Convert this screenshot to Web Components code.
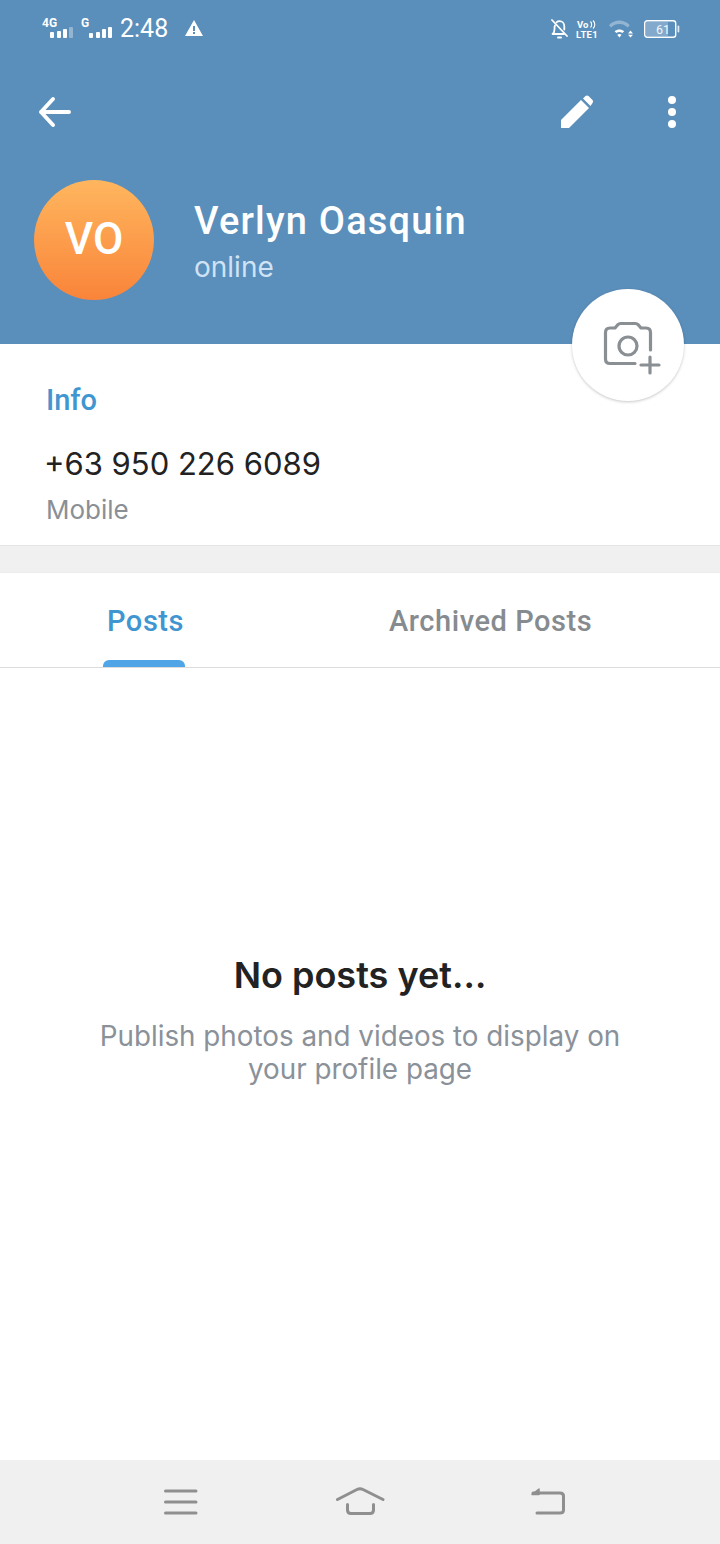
<!DOCTYPE html>
<html>
<head>
<meta charset="utf-8">
<style>
html,body{margin:0;padding:0;}
body{font-family:Roboto,"Liberation Sans",sans-serif;background:#fff;}
</style>
</head>
<body>
<profile-page>
  <status-bar></status-bar>
  <profile-header name="Verlyn Oasquin" status="online" initials="VO"></profile-header>
  <info-section phone="+63 950 226 6089" label="Mobile"></info-section>
  <post-tabs></post-tabs>
  <empty-state heading="No posts yet…">Publish photos and videos to display on<br>your profile page</empty-state>
  <nav-bar></nav-bar>
</profile-page>
<script>
class ProfilePage extends HTMLElement {
  constructor(){
    super()
    this.attachShadow({mode:'open'})
    this.shadowRoot.innerHTML = `<style>
      :host{display:flex;flex-direction:column;width:720px;height:1544px;background:#fff;overflow:hidden;}
    </style><slot></slot>`
  }
}
customElements.define('profile-page',ProfilePage)

class StatusBar extends HTMLElement {
  constructor(){
    super()
    this.attachShadow({mode:'open'})
    this.shadowRoot.innerHTML = `<style>
      :host{display:flex;height:56px;box-sizing:border-box;padding:15px 40px 0 42px;background:#5a8ebb;color:#fff;align-items:flex-start;}
      svg{display:block;fill:#fff;flex:none;}
      .left{display:flex;flex:1;}
      .right{display:flex;}
      .time{font:400 25px/28px Roboto,sans-serif;}
      text{font-family:Roboto,sans-serif;}
    </style>
    <div class="left">
      <svg width="32" height="24" viewBox="0 0 32 24" style="margin-right:7px">
        <text x="0" y="12" font-weight="700" font-size="12">4G</text>
        <rect x="8" y="17" width="4" height="6" rx="1"/><rect x="15" y="16" width="4" height="7" rx="1"/>
        <rect x="21" y="14" width="4" height="9" rx="1"/><rect x="27" y="12" width="4" height="11" rx="1" opacity=".35"/>
      </svg>
      <svg width="33" height="24" viewBox="0 0 33 24" style="margin-right:6px">
        <text x="0" y="12" font-weight="700" font-size="12">G</text>
        <rect x="8" y="18" width="4" height="5" rx="1"/><rect x="15" y="17" width="4" height="6" rx="1"/>
        <rect x="21" y="14" width="4" height="9" rx="1"/><rect x="27" y="12" width="4" height="11" rx="1"/>
      </svg>
      <span class="time">2:48</span>
      <svg width="18" height="16" viewBox="0 0 18 16" style="margin:5px 0 0 17px">
        <path fill-rule="evenodd" d="M9 0 18 16H0ZM8 6V11H10V6ZM8 12V14H10V12Z"/>
      </svg>
    </div>
    <div class="right">
      <svg width="17" height="20" viewBox="0 0 17 20" style="margin:4px 0 0 0">
        <g fill="none" stroke="#fff" stroke-width="1.8" stroke-linecap="round" stroke-linejoin="round">
          <path d="M4 6.500C3.400 7.500 3.500 9 3.500 10.500 3.500 12.500 2.800 14 1.500 15H13"/>
          <path d="M5.500 3.400C6.300 2.600 7.300 2.200 8.500 2.200 11.300 2.200 13.300 4.400 13.300 7.200V10.500"/>
          <path d="M1 1 16 17"/>
        </g>
        <rect x="6" y="17.500" width="5" height="2" rx="1"/>
      </svg>
      <svg width="25" height="20" viewBox="0 0 25 20" style="margin:5px 0 0 8px;margin-right:-1px">
        <text x="1" y="7.500" font-weight="700" font-size="9.500">Vo</text>
        <path d="M14.500 1.500C16 3 16 6 14.500 7.500M17 .5C19.400 2.800 19.400 6.200 17 8.500" fill="none" stroke="#fff" stroke-width="1.100"/>
        <text x="0" y="18" font-weight="700" font-size="9.500" letter-spacing=".3">LTE1</text>
      </svg>
      <svg width="26" height="20" viewBox="0 0 26 20" style="margin:4px 0 0 9px">
        <path d="M0 6.200C5.600 0 15.200 0 20.800 6.200L18.600 8.400C14.200 3.800 6.600 3.800 2.200 8.400Z" opacity=".35"/>
        <path d="M5.600 12.200C8.400 9.800 12.400 9.800 15.200 12.200L13.400 14C11.600 12.600 9.200 12.600 7.400 14Z"/>
        <path d="M8.200 15.800C9.500 14.600 11.300 14.600 12.600 15.800L10.400 18.400Z"/>
        <path d="M21.500 11.500 24 14.500H19ZM19 15.800H24L21.500 18.400Z"/>
      </svg>
      <svg width="36" height="18" viewBox="0 0 36 18" style="margin:5px 0 0 9px">
        <rect x="2" y="2" width="22" height="14" fill="#fff" opacity=".25"/>
        <rect x=".7" y=".7" width="31" height="16.600" rx="2.500" fill="none" stroke="#fff" stroke-width="1.400"/>
        <rect x="33.500" y="5.500" width="1.800" height="7" rx=".9" opacity=".8"/>
        <text x="12" y="14" font-size="12.500" opacity=".9">61</text>
      </svg>
    </div>`
  }
}
customElements.define('status-bar',StatusBar)

class ProfileHeader extends HTMLElement {
  constructor(){
    super()
    this.attachShadow({mode:'open'})
    this.shadowRoot.innerHTML = `<style>
      :host{display:block;position:relative;height:288px;background:#5a8ebb;color:#fff;}
      .tools{display:flex;align-items:center;height:82px;padding:30px 44px 0 36px;box-sizing:border-box;}
      .tools svg{display:block;}
      .back{flex:1;}
      .hero{display:flex;align-items:center;gap:40px;margin-top:42px;padding-left:34px;}
      .avatar{width:120px;height:120px;border-radius:50%;flex:none;display:flex;align-items:center;justify-content:center;
        background:linear-gradient(#ffb65e,#f9843a);font:500 44px/1 Roboto,sans-serif;padding-bottom:2px;box-sizing:border-box;}
      .name{font:500 38px/44px Roboto,sans-serif;letter-spacing:1.200px;margin-top:3px;}
      .status{font:400 28px/34px Inter,Roboto,sans-serif;color:#cfe3f5;margin-top:7px;}
      .fab{position:absolute;left:572px;top:233px;width:112px;height:112px;border-radius:50%;background:#fff;
        box-shadow:0 1px 3px rgba(0,0,0,.22);display:flex;align-items:center;justify-content:center;}
      .fab svg{overflow:visible;}
    </style>
    <div class="tools">
      <svg class="back" width="38" height="36" viewBox="0 0 38 36" preserveAspectRatio="xMinYMid meet">
        <path d="M5 18H33M17 5 5 18 17 31" fill="none" stroke="#fff" stroke-width="4" stroke-linecap="round" stroke-linejoin="round"/>
      </svg>
      <svg width="34" height="34" viewBox="0 0 34 34" style="margin-right:74px" fill="#fff">
        <path d="M1 25 21 5 29 13 9 33H1Z"/>
        <path d="M23 3.500 25.500 1C26.300.2 27.700.2 28.500 1L32.500 5C33.300 5.800 33.300 7.200 32.500 8L30.500 11Z"/>
      </svg>
      <svg width="8" height="32" viewBox="0 0 8 32" fill="#fff">
        <circle cx="4" cy="4" r="4"/><circle cx="4" cy="16" r="4"/><circle cx="4" cy="28" r="4"/>
      </svg>
    </div>
    <div class="hero">
      <div class="avatar">${this.getAttribute('initials')}</div>
      <div>
        <div class="name">${this.getAttribute('name')}</div>
        <div class="status">${this.getAttribute('status')}</div>
      </div>
    </div>
    <div class="fab">
      <svg width="60" height="56" viewBox="0 0 60 56" fill="none" stroke="#8a8f93" stroke-width="3.200" stroke-linecap="round" stroke-linejoin="round">
        <path d="M37 46.500H12C9 46.500 7.500 45 7.500 42V15.500C7.500 12.500 9 11 12 11H17L20 7.500C20.600 6.800 21.500 6.500 22.500 6.500H37.500C38.500 6.500 39.400 6.800 40 7.500L43 11H48C51 11 52.500 12.500 52.500 15.500V33"/>
        <circle cx="30" cy="29" r="9"/>
        <path d="M52 40V56M43 48H61"/>
      </svg>
    </div>`
  }
}
customElements.define('profile-header',ProfileHeader)

class InfoSection extends HTMLElement {
  constructor(){
    super()
    this.attachShadow({mode:'open'})
    this.shadowRoot.innerHTML = `<style>
      :host{display:block;height:201px;box-sizing:border-box;padding:36px 46px 0 46px;background:#fff;}
      .h{font:500 29px/40px Roboto,sans-serif;color:#3f96d0;}
      .phone{font:400 31px/44px Inter,Roboto,sans-serif;color:#222;margin:22px 0 0 -2px;}
      .label{font:400 26px/36px Inter,Roboto,sans-serif;color:#8a8f95;margin-top:6px;}
    </style>
    <div class="h">Info</div>
    <div class="phone">${this.getAttribute('phone')}</div>
    <div class="label">${this.getAttribute('label')}</div>`
  }
}
customElements.define('info-section',InfoSection)

class PostTabs extends HTMLElement {
  constructor(){
    super()
    this.attachShadow({mode:'open'})
    this.shadowRoot.innerHTML = `<style>
      :host{display:block;background:#f0f0f0;border-top:1px solid #e4e4e4;padding-top:26px;}
      .bar{display:flex;gap:205px;height:96px;box-sizing:border-box;padding-left:107px;background:#fff;border-top:1px solid #ececec;border-bottom:1px solid #dcdcdc;}
      .tab{position:relative;font:500 29px/96px Roboto,sans-serif;color:#868b8f;letter-spacing:.55px;}
      .on{color:#3f96d0;}
      .on::after{content:"";position:absolute;left:-4px;width:82px;bottom:0;height:7px;background:#50a5e6;border-radius:6px 6px 0 0;}
    </style>
    <div class="bar"><div class="tab on">Posts</div><div class="tab">Archived Posts</div></div>`
  }
}
customElements.define('post-tabs',PostTabs)

class EmptyState extends HTMLElement {
  constructor(){
    super()
    this.attachShadow({mode:'open'})
    this.shadowRoot.innerHTML = `<style>
      :host{display:block;flex:1;box-sizing:border-box;padding-top:281px;text-align:center;}
      h2{margin:0;font:600 36px/52px Inter,Roboto,sans-serif;color:#222;}
      p{margin:19px 0 0;font:400 27.800px/33px Inter,Roboto,sans-serif;color:#8a9199;}
    </style>
    <h2>${this.getAttribute('heading')}</h2>
    <p><slot></slot></p>`
  }
}
customElements.define('empty-state',EmptyState)

class NavBar extends HTMLElement {
  constructor(){
    super()
    this.attachShadow({mode:'open'})
    this.shadowRoot.innerHTML = `<style>
      :host{display:flex;height:84px;background:#f0f0f0;align-items:flex-start;box-sizing:border-box;padding:25px 0 0 164px;}
      svg{display:block;fill:none;stroke:#8f8f8f;stroke-width:3;stroke-linecap:round;stroke-linejoin:round;}
    </style>
    <svg width="34" height="30" viewBox="0 0 34 30" style="margin-top:2px"><path d="M1.500 4H32M1.500 15H32M1.500 26H32"/></svg>
    <svg width="50" height="34" viewBox="0 0 50 34" style="margin:0 145px 0 137px">
      <path d="M2.500 14.500 22 4.500C23.500 3.700 26.500 3.700 28 4.500L48 14.500"/>
      <path d="M12.500 19.500V25C12.500 27.500 14 28.500 16 28.500H35C37 28.500 38.500 27.500 38.500 25V19.500"/>
    </svg>
    <svg width="36" height="30" viewBox="0 0 36 30" style="margin-top:2px"><path d="M3 6H30C32 6 33.500 7 33.500 9V23C33.500 25 32 26 30 26H7"/><path d="M2 7.500 9 2V7.500Z" fill="#8f8f8f" stroke-width="1.500"/></svg>`
  }
}
customElements.define('nav-bar',NavBar)
</script>
</body>
</html>
